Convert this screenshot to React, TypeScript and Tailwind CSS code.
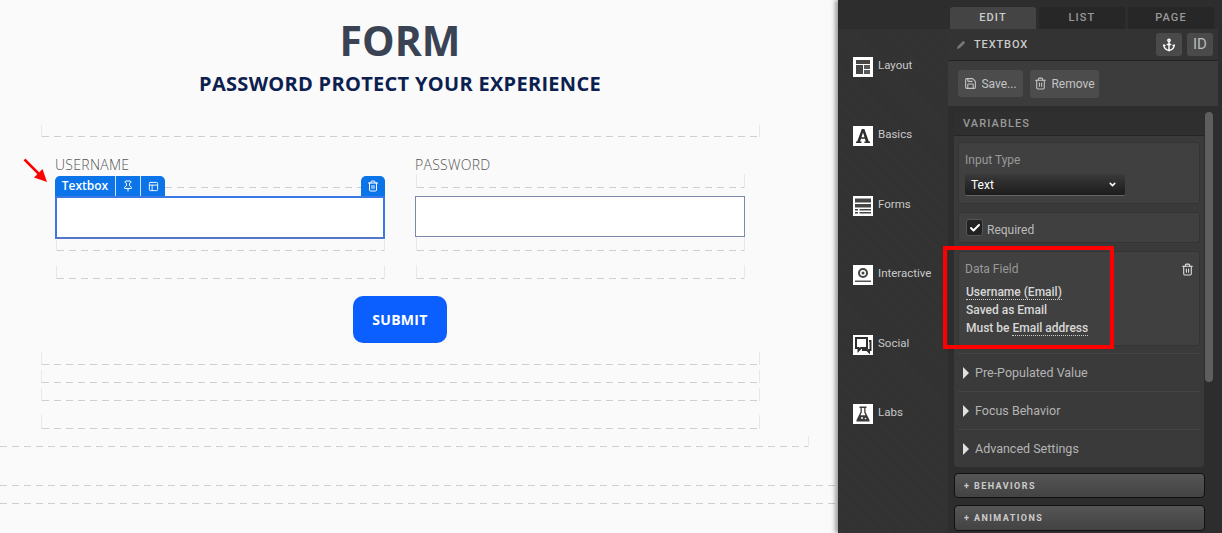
import { Anchor, Check, ChevronDown, PanelsTopLeft, Pin, Save, Trash2 } from 'lucide-react';

const texture = 'bg-[repeating-linear-gradient(45deg,#343434_0_1px,#313131_1px_2px)]';

// dashed drop zone outline, open at the top
function Zone({ className = '' }: { className?: string }) {
  return (
    <div
      className={`border-x border-[#e8e8e8] bg-[repeating-linear-gradient(90deg,#cfcfcf_0_7px,transparent_7px_12px)] bg-[length:100%_1px] bg-bottom bg-no-repeat ${className}`}
    />
  );
}

function DashLine({ className = '' }: { className?: string }) {
  return <div className={`h-px bg-[repeating-linear-gradient(90deg,#cfcfcf_0_7px,transparent_7px_12px)] ${className}`} />;
}

function LayoutIcon() {
  return (
    <svg viewBox="0 0 20 20" className="h-5 w-5">
      <rect width="20" height="20" fill="#fff" />
      <rect x="3" y="3" width="14" height="4" fill="#454545" />
      <rect x="3" y="8" width="7" height="9" fill="#454545" />
      <rect x="11" y="8" width="6" height="4" fill="#5a5a5a" />
      <rect x="11" y="13" width="6" height="4" fill="#5a5a5a" />
    </svg>
  );
}

function BasicsIcon() {
  return (
    <svg viewBox="0 0 20 20" className="h-5 w-5">
      <rect width="20" height="20" fill="#fff" />
      <path d="M8.800 3h2.600l4.400 12.600h1.200V17h-5.600v-1.400h1.400l-.9-2.800H8l-.9 2.800h1.400V17H3v-1.400h1.200L8.800 3Zm1.200 3.400L8.500 11.200h3L10 6.400Z" fill="#2e2e2e" fillRule="evenodd" />
    </svg>
  );
}

function FormsIcon() {
  return (
    <svg viewBox="0 0 20 20" className="h-5 w-5">
      <rect width="20" height="20" fill="#fff" />
      <rect x="2" y="2.500" width="16" height="4" fill="#444" />
      <rect x="2" y="8" width="16" height="3.500" fill="#444" />
      <rect x="2" y="13" width="3" height="1.500" fill="#444" />
      <rect x="6.500" y="13" width="11.500" height="1.500" fill="#444" />
      <rect x="2" y="16" width="3" height="1.500" fill="#444" />
      <rect x="6.500" y="16" width="11.500" height="1.500" fill="#444" />
    </svg>
  );
}

function InteractiveIcon() {
  return (
    <svg viewBox="0 0 20 20" className="h-5 w-5">
      <rect width="20" height="20" fill="#fff" />
      <circle cx="10" cy="8" r="5" fill="#444" />
      <circle cx="10" cy="8" r="3" fill="#fff" />
      <circle cx="10" cy="8" r="1.500" fill="#444" />
      <rect x="2" y="15.500" width="16" height="1.500" fill="#555" />
    </svg>
  );
}

function SocialIcon() {
  return (
    <svg viewBox="0 0 20 20" className="h-5 w-5">
      <rect width="20" height="20" fill="#fff" />
      <path d="M3 3h11v10H8l-2.500 2.500V13H3V3Z" fill="#fff" stroke="#2e2e2e" strokeWidth="2" />
      <path d="M16 6h1.500v9H16v2l-2-2H9" fill="none" stroke="#2e2e2e" strokeWidth="2" />
    </svg>
  );
}

function LabsIcon() {
  return (
    <svg viewBox="0 0 20 20" className="h-5 w-5">
      <rect width="20" height="20" fill="#fff" />
      <path d="M6.500 2.500h7v1.500h-1v4l4 8v1.500h-13V16l4-8V4h-1V2.500Z" fill="#3a3a3a" />
      <path d="M8.800 4h2.400v4.400l1.400 2.800H7.400l1.400-2.800V4Z" fill="#fff" />
      <circle cx="9" cy="14" r="1" fill="#fff" />
      <circle cx="12.500" cy="14.500" r=".8" fill="#fff" />
    </svg>
  );
}

const navItems = [
  { label: 'Layout', icon: <LayoutIcon /> },
  { label: 'Basics', icon: <BasicsIcon /> },
  { label: 'Forms', icon: <FormsIcon /> },
  { label: 'Interactive', icon: <InteractiveIcon /> },
  { label: 'Social', icon: <SocialIcon /> },
  { label: 'Labs', icon: <LabsIcon /> },
];

function Collapsed({ label }: { label: string }) {
  return (
    <div className="flex h-[38px] items-center border-t border-[#444] pl-[5px]">
      <span className="h-0 w-0 border-y-[6px] border-l-[6px] border-y-transparent border-l-[#e0e0e0]" />
      <span className="mt-[2px] ml-[6px] text-[12.500px] text-[#b4b4b4]">{label}</span>
    </div>
  );
}

export default function App() {
  return (
    <div className="relative flex h-[533px] w-[1222px] overflow-hidden bg-[#fafafa] font-['Roboto',sans-serif]">
      {/* Canvas */}
      <div className="flex w-[838px] shrink-0 flex-col font-['Open_Sans',sans-serif]">
        <h1 className="mt-[14px] flex h-[54px] w-[800px] items-center justify-center text-[41px] font-bold text-[#3a4354]">FORM</h1>
        <h2 className="mt-px flex h-[30px] w-[800px] items-center justify-center text-[20px] font-bold tracking-[0.015em] text-[#0c2050]">
          PASSWORD PROTECT YOUR EXPERIENCE
        </h2>
        <Zone className="mt-[26px] ml-[41px] h-3 w-[719px]" />

        <div className="ml-[55px] flex gap-[30px]">
          <div className="flex w-[330px] flex-col">
            <label className="mt-[19px] h-[18px] text-sm leading-[18px] font-light tracking-[0.02em] text-[#555]">USERNAME</label>
            <div className="mt-[2px] flex h-5 items-start text-white">
              <div className="flex h-5 items-stretch rounded-t-[5px] bg-[#0a74e8]">
                <span className="flex w-[61px] items-center justify-center border-r border-[#cfe3fb] text-xs font-semibold">Textbox</span>
                <span className="flex w-[25px] items-center justify-center border-r border-[#cfe3fb]">
                  <Pin size={12} />
                </span>
                <span className="flex w-6 items-center justify-center">
                  <PanelsTopLeft size={11} />
                </span>
              </div>
              <DashLine className="mt-[11px] flex-1" />
              <span className="flex h-5 w-6 items-center justify-center rounded-t-[5px] bg-[#0a74e8]">
                <Trash2 size={12} />
              </span>
            </div>
            <input className="h-[43px] border-2 border-[#3b78e7] border-b-[#5577c8] bg-white" />
            <Zone className="mt-px ml-px h-[11px]" />
            <Zone className="mt-[15px] ml-px h-[13px]" />
          </div>

          <div className="flex w-[330px] flex-col">
            <label className="mt-[19px] h-[18px] text-sm leading-[18px] font-light tracking-[0.02em] text-[#555]">PASSWORD</label>
            <Zone className="ml-px h-[14px]" />
            <input className="mt-2 h-[41px] border border-[#7b8aa8] bg-white" />
            <Zone className="ml-px h-[14px]" />
            <Zone className="mt-[14px] ml-px h-[14px]" />
          </div>
        </div>

        <button className="mt-[17px] ml-[353px] h-[47px] w-[94px] rounded-[10px] bg-[#0b5fff] text-sm font-bold tracking-[0.02em] text-white">SUBMIT</button>

        <Zone className="mt-[9px] ml-[41px] h-[13px] w-[719px]" />
        <Zone className="mt-[5px] ml-[41px] h-[13px] w-[719px]" />
        <Zone className="mt-[5px] ml-[41px] h-[13px] w-[719px]" />
        <Zone className="mt-[14px] ml-[41px] h-[14px] w-[719px]" />
        <Zone className="mt-[7px] h-[11px] w-[809px] border-l-0" />
        <DashLine className="mt-[38px]" />
        <DashLine className="mt-[17px]" />
      </div>

      {/* Editor panel */}
      <div className="z-10 flex w-[384px] shrink-0 flex-col bg-[#2d2d2d] text-xs shadow-[-3px_0_4px_rgba(0,0,0,0.35)]">
        <div className="flex h-[29px] shrink-0 items-end gap-[3px] pl-[112px] text-[11px] font-medium tracking-[0.1em]">
          <div className="flex h-[22px] w-[86px] items-center justify-center rounded-t-[3px] bg-[#444] text-[#ccc]">EDIT</div>
          <div className="flex h-[22px] w-[86px] items-center justify-center rounded-t-[3px] bg-[#272727] text-[#999]">LIST</div>
          <div className="flex h-[22px] w-[86px] items-center justify-center rounded-t-[3px] bg-[#272727] text-[#999]">PAGE</div>
        </div>

        <div className="flex min-h-0 flex-1">
          <nav className={`flex w-[110px] shrink-0 flex-col gap-[49.400px] pt-[28px] pl-[15px] ${texture}`}>
            {navItems.map((item) => (
              <div key={item.label} className="flex h-5 items-start gap-[5px]">
                {item.icon}
                <span className="-mt-px text-[11.500px] leading-[18px] text-[#c8c8c8]">{item.label}</span>
              </div>
            ))}
          </nav>

          <div className="flex w-[270px] shrink-0 flex-col">
            <div className="flex h-8 shrink-0 items-center border-b border-[#222] bg-[#333] pr-[5px] pl-[8px]">
              <svg viewBox="0 0 12 12" className="h-[11px] w-[11px]">
                <path d="M1 11l1-3 6-6 2 2-6 6-3 1Z" fill="#777" />
              </svg>
              <span className="mt-[2px] ml-[7px] text-[11px] font-medium tracking-[0.08em] text-[#ccc]">TEXTBOX</span>
              <span className="ml-auto flex h-[23px] w-[26px] items-center justify-center rounded-[3px] bg-[#4a4a4a] text-white">
                <Anchor size={14} strokeWidth={2.500} />
              </span>
              <span className="ml-[5px] flex h-[23px] w-[26px] items-center justify-center rounded-[3px] bg-[#4a4a4a] text-[15px] text-[#bbb]">ID</span>
            </div>

            <div className="flex h-[45px] shrink-0 items-center gap-[7px] bg-[#3c3c3c] pl-[10px]">
              <span className="flex h-[27px] w-[65px] items-center justify-center gap-[4px] rounded-[3px] bg-[#4c4c4c] text-[#c4c4c4]">
                <Save size={13} />
                Save...
              </span>
              <span className="flex h-[28px] w-[69px] items-center justify-center gap-[4px] rounded-[3px] bg-[#4c4c4c] text-[#c4c4c4]">
                <Trash2 size={13} />
                Remove
              </span>
            </div>

            <div className="flex flex-1 flex-col pt-[6px] pl-[6px]">
              <div className="flex h-[355px] shrink-0">
                <div className="flex w-[250px] shrink-0 flex-col rounded-[3px] bg-[#3a3a3a]">
                  <div className="flex h-6 shrink-0 items-center rounded-t-[3px] border-b border-[#262626] bg-[#2f2f2f] pt-px pl-[9px] text-[11px] font-medium tracking-[0.1em] text-[#999]">
                    VARIABLES
                  </div>
                  <div className="flex flex-col px-1 pt-[6px]">
                    <div className="h-[62px] rounded-[3px] border border-[#343434] bg-[#404040] pt-[9px] pl-[6px]">
                      <div className="text-xs leading-4 text-[#999]">Input Type</div>
                      <div className="mt-[6px] flex h-[22px] w-[160px] items-center justify-between rounded-[2px] border-b border-[#666] bg-gradient-to-b from-[#3a3a3a] to-[#1c1c1c] pr-[8px] pl-[6px] text-white">
                        Text
                        <ChevronDown size={9} strokeWidth={4} />
                      </div>
                    </div>
                    <div className="mt-2 flex h-[31px] items-center rounded-[3px] border border-[#343434] bg-[#404040] pl-[7px]">
                      <span className="flex h-[17px] w-[17px] items-center justify-center rounded-[3px] border border-[#555] bg-[#222] text-white">
                        <Check size={12} strokeWidth={4} />
                      </span>
                      <span className="mt-[5px] ml-1 text-[#bbb]">Required</span>
                    </div>
                    <div className="mt-2 flex h-[95px] justify-between rounded-[3px] border border-[#343434] bg-[#404040] pt-[9px] pr-[5px] pl-[6px]">
                      <div>
                        <div className="text-xs leading-4 text-[#999]">Data Field</div>
                        <div className="mt-[6px] pl-px text-xs leading-[18px] font-medium text-[#d8d8d8]">
                          <div>
                            <span className="border-b border-dotted border-[#ccc]">Username (Email)</span>
                          </div>
                          <div>Saved as Email</div>
                          <div>
                            Must be <span className="border-b border-dotted border-[#ccc]">Email address</span>
                          </div>
                        </div>
                      </div>
                      <Trash2 size={13} className="mt-[2px] text-[#ddd]" />
                    </div>
                    <div className="mt-[7px]">
                      <Collapsed label="Pre-Populated Value" />
                      <Collapsed label="Focus Behavior" />
                      <Collapsed label="Advanced Settings" />
                    </div>
                  </div>
                </div>
                <div className="ml-px w-2 shrink-0">
                  <div className="h-[270px] rounded-[4px] bg-[#5e5e5e]" />
                </div>
              </div>
              <div className="mt-[6px] flex h-[25px] w-[251px] items-center rounded-[4px] border border-[#111] bg-gradient-to-b from-[#555] to-[#434343] pl-[9px] text-[9px] font-bold tracking-[0.16em] text-[#ccc]">
                + BEHAVIORS
              </div>
              <div className="mt-[7px] flex h-[26px] w-[251px] items-center rounded-[4px] border border-[#111] bg-gradient-to-b from-[#555] to-[#434343] pl-[9px] text-[9px] font-bold tracking-[0.16em] text-[#ccc]">
                + ANIMATIONS
              </div>
            </div>
          </div>
        </div>
      </div>

      {/* Annotations */}
      <svg viewBox="0 0 30 30" className="absolute top-[156px] left-[21px] z-20 h-[30px] w-[30px]">
        <path d="M3.500 3.500L18 18" stroke="#f00" strokeWidth="2.500" />
        <path d="M26 26L13 21.500L21.500 13Z" fill="#f00" />
      </svg>
      <div className="absolute top-[246px] left-[943px] z-20 h-[103px] w-[171px] border-4 border-[#f00]" />
    </div>
  );
}
